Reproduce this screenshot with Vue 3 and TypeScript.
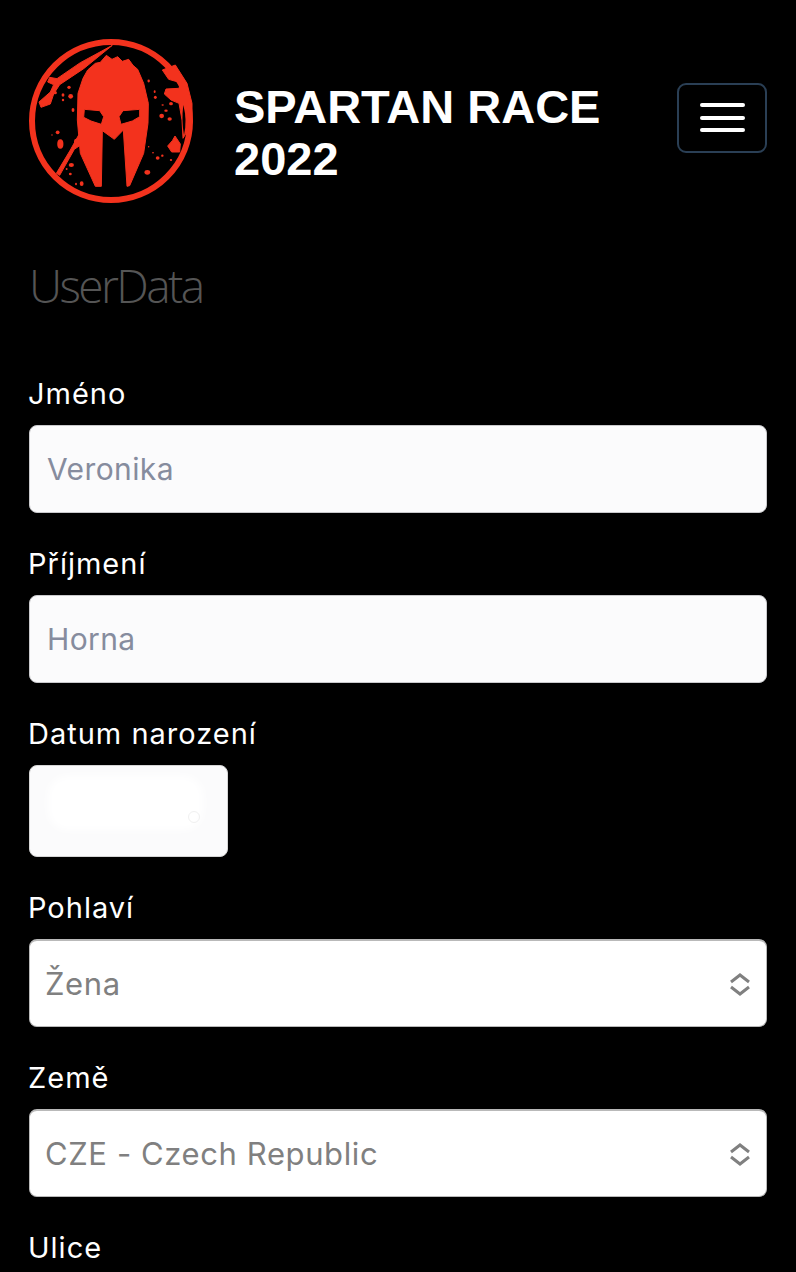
<script setup lang="ts">
interface Field {
  label: string
  kind: 'input' | 'date' | 'select'
  value?: string
}
const fields: Field[] = [
  { label: 'Jméno', kind: 'input', value: 'Veronika' },
  { label: 'Příjmení', kind: 'input', value: 'Horna' },
  { label: 'Datum narození', kind: 'date' },
  { label: 'Pohlaví', kind: 'select', value: 'Žena' },
  { label: 'Země', kind: 'select', value: 'CZE - Czech Republic' },
]
const drops: [number, number, number, number][] = [
  [164, 218, 8, 7], [206, 202, 7, 7], [188, 225, 6, 7], [211, 229, 10, 10], [188, 240, 5, 5], [218, 270, 6, 8],
  [445, 183, 5, 6], [463, 215, 4, 6], [465, 232, 6, 7], [512, 251, 8, 7], [487, 255, 5, 3], [497, 272, 7, 5],
  [484, 288, 10, 9], [508, 297, 9, 7], [172, 337, 8, 8], [155, 345, 3, 3], [213, 435, 11, 8], [199, 447, 4, 4],
  [210, 462, 6, 5], [227, 492, 4, 5], [244, 491, 8, 10], [441, 457, 12, 10], [472, 414, 8, 7], [486, 407, 5, 5],
  [458, 398, 4, 3], [445, 380, 3, 3], [512, 420, 5, 4], [180, 372, 13, 20], [228, 366, 10, 14],
]
</script>

<template>
  <div class="page">
    <header class="header">
      <svg class="logo" viewBox="86 57 492 492" aria-hidden="true">
        <circle cx="332" cy="303" r="237" fill="none" stroke="#f3321d" stroke-width="18" />
        <path class="red soft" d="M336 76 L240 128 L170 176 L148 172 L142 186 L160 194 L150 216 L116 246 L122 262 L150 252 L160 222 L178 194 L250 146 Z" />
        <path class="red soft" d="M486 150 L505 178 L530 185 L545 190 L535 205 L497 207 L492 222 L512 240 L536 250 L545 300 L548 355 L575 310 L575 250 L560 190 L525 135 Z" />
        <path class="black" d="M549 255 Q561 300 551 345 Q543 300 549 255 Z" />
        <path class="red soft" d="M502 378 L516 362 L524 348 L540 372 L538 396 L514 396 Z" />
        <path class="red soft" d="M235 345 L210 390 L168 460 L178 466 L222 388 L242 374 Z" />
        <path class="red soft" fill-rule="evenodd" d="M262 150 L285 130 L300 127 L318 106 L335 118 L352 110 L366 124 L385 118 L398 136 L412 148 L430 190 L444 250 L443 310 L430 400 L388 497 L380 499 L369 330 L342 358 L306 332 L303 499 L285 499 L240 400 L231 300 L233 220 L248 175 Z
          M252 268 L298 272 L310 290 L303 313 L272 303 L250 292 Z
          M418 268 L368 272 L356 290 L362 313 L396 303 L418 290 Z" />
        <ellipse v-for="(d, i) in drops" :key="i" class="red" :cx="d[0]" :cy="d[1]" :rx="d[2] / 1.4" :ry="d[3] / 1.4" />
      </svg>
      <h1 class="title">SPARTAN RACE 2022</h1>
      <button class="burger" type="button" aria-label="Menu">
        <span></span><span></span><span></span>
      </button>
    </header>

    <h2 class="heading">UserData</h2>

    <form class="form" @submit.prevent>
      <div v-for="f in fields" :key="f.label" class="field">
        <div class="label">{{ f.label }}</div>
        <div v-if="f.kind === 'input'" class="control input">{{ f.value }}</div>
        <div v-else-if="f.kind === 'date'" class="control date"><i class="mask"></i><i class="dot"></i></div>
        <div v-else class="control select">
          {{ f.value }}
          <svg class="chev" width="22" height="24" viewBox="0 0 22 24" aria-hidden="true">
            <path d="M2 10 L11 3 L20 10 M2 15 L11 22 L20 15" fill="none" stroke="#808080" stroke-width="3" />
          </svg>
        </div>
      </div>
      <div class="field">
        <div class="label">Ulice</div>
      </div>
    </form>
  </div>
</template>

<style scoped>
.page {
  box-sizing: border-box;
  height: 1272px;
  overflow: hidden;
  background: #000;
  padding: 39px 29px 0;
  font-family: Inter, "Liberation Sans", sans-serif;
}
.header {
  display: flex;
  align-items: center;
  height: 164px;
}
.logo {
  width: 164px;
  height: 164px;
  flex: none;
  filter: blur(0.5px);
}
.red { fill: #f3321d; }
.soft { stroke: #f3321d; stroke-width: 3; stroke-linejoin: round; }
.black { fill: #000; }
.title {
  margin: 24px 0 0 41px;
  flex: 1;
  max-width: 390px;
  color: #fff;
  font: 700 47px/52px "Liberation Sans", Arial, sans-serif;
}
.burger {
  margin: 0 0 7px auto;
  width: 90px;
  height: 70px;
  box-sizing: border-box;
  border: 2px solid #2a3f55;
  border-radius: 9px;
  background: transparent;
  display: flex;
  flex-direction: column;
  align-items: center;
  justify-content: center;
  gap: 8.5px;
  padding: 0;
}
.burger span {
  width: 45px;
  height: 4px;
  border-radius: 2px;
  background: #fff;
}
.heading {
  margin: 55px 0 0;
  color: #555;
  font: 300 46px/54px "Open Sans", sans-serif;
  letter-spacing: -2.6px;
}
.form {
  margin-top: 61px;
  display: flex;
  flex-direction: column;
  gap: 30px;
}
.label {
  color: #fff;
  font-size: 29px;
  line-height: 42px;
  margin-bottom: 10px;
  letter-spacing: 1px;
  margin-left: -1px;
}
.control {
  box-sizing: border-box;
  height: 88px;
  border-radius: 8px;
  display: flex;
  align-items: center;
  font-size: 30px;
}
.input {
  background: #fbfbfc;
  border: 1px solid #c9c9cc;
  padding-left: 17px;
  color: #868c9e;
  letter-spacing: 0.4px;
}
.date {
  position: relative;
  width: 199px;
  height: 92px;
  background: #fbfbfc;
  border: 1px solid #d5d5d5;
}
.mask {
  position: absolute;
  left: 18px;
  right: 24px;
  top: 10px;
  bottom: 26px;
  background: #fff;
  border-radius: 20px;
  filter: blur(4px);
}
.dot {
  position: absolute;
  left: 158px;
  top: 45px;
  width: 10px;
  height: 10px;
  border-radius: 50%;
  border: 1px solid #f0f0f0;
}
.select {
  justify-content: space-between;
  background: #fff;
  border: 1px solid #b9b9b9;
  border-top: 2px solid #b9b9b9;
  padding: 0 15px 0 15px;
  color: #808080;
  font-size: 31px;
  letter-spacing: 0.6px;
}
.chev {
  flex: none;
}
</style>

<style>
html, body { margin: 0; background: #000; }
</style>
